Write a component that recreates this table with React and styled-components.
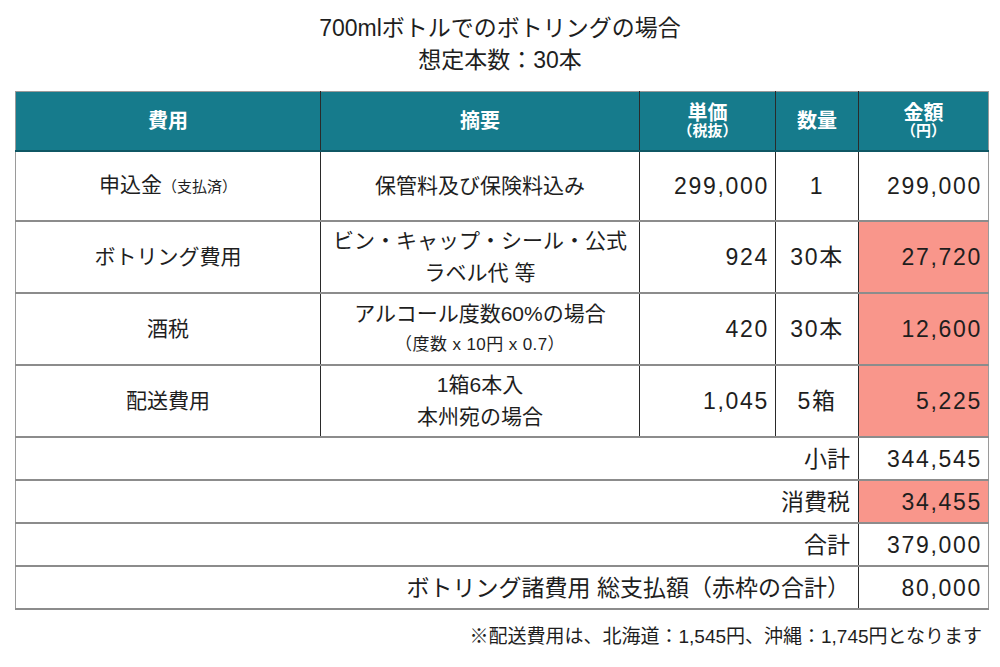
import React from 'react'
import styled, { createGlobalStyle } from 'styled-components'

const GlobalStyle = createGlobalStyle`
  body {
    margin: 0;
    background: #fff;
    font-family: "Liberation Sans", "Noto Sans CJK JP", sans-serif;
    color: #1e1e1e;
  }
`

const Page = styled.div`
  width: 1000px;
  height: 667px;
  padding: 12px 0 0 15px;
  box-sizing: border-box;
`

const Title = styled.h1`
  margin: 0 15px 15px 0;
  font-size: 23px;
  font-weight: 400;
  line-height: 32px;
  text-align: center;
`

const Table = styled.table`
  width: 973px;
  border-collapse: collapse;
  table-layout: fixed;
  border: 1px solid #9a9a9a;
`

const HeadCell = styled.th`
  height: 58px;
  padding: 0;
  background: #167b8c;
  color: #fff;
  font-size: 20px;
  font-weight: 700;
  line-height: 19px;
  border-right: 1px solid #2a2a2a;
  border-bottom: 2px solid #0f5764;
  &:last-child { border-right: 1px solid #9a9a9a; }
`

const SubHead = styled.span`
  display: block;
  font-size: 15px;
  line-height: 16px;
`

const Row = styled.tr`
  height: ${p => p.$h}px;
  border-bottom: 2px solid #8c8c8c;
`

const Cell = styled.td`
  padding: 0 ${p => (p.$align === 'right' ? '8px' : '4px')};
  text-align: ${p => p.$align || 'center'};
  font-size: ${p => (p.$large ? 23 : 21)}px;
  line-height: 32px;
  background: ${p => (p.$pink ? '#f9968b' : '#fff')};
  border-right: 1px solid #2a2a2a;
  &:last-child { border-right: 1px solid #9a9a9a; }
`

const Num = styled(Cell)`
  padding-right: ${p => (p.$align === 'right' ? '6px' : '4px')};
  font-size: 23px;
  letter-spacing: 1.7px;
`

const Small = styled.span`
  font-size: 15px;
`

const Note = styled.span`
  display: block;
  font-size: 17px;
  line-height: 30px;
  letter-spacing: 0.4px;
`

const Footnote = styled.p`
  width: 973px;
  margin: 16px 0 0;
  padding-right: 6px;
  box-sizing: border-box;
  text-align: right;
  font-size: 19px;
  line-height: 22px;
`

const rows = [
  { name: <>申込金<Small>（支払済）</Small></>, desc: '保管料及び保険料込み', price: '299,000', qty: '1', amount: '299,000', h: 70 },
  { name: 'ボトリング費用', desc: <>ビン・キャップ・シール・公式<br />ラベル代 等</>, price: '924', qty: '30本', amount: '27,720', pink: true, h: 72 },
  { name: '酒税', desc: <>アルコール度数60%の場合<Note>（度数 x 10円 x 0.7）</Note></>, price: '420', qty: '30本', amount: '12,600', pink: true, h: 72 },
  { name: '配送費用', desc: <>1箱6本入<br />本州宛の場合</>, price: '1,045', qty: '5箱', amount: '5,225', pink: true, h: 72 },
]

const totals = [
  { label: '小計', value: '344,545' },
  { label: '消費税', value: '34,455', pink: true },
  { label: '合計', value: '379,000' },
  { label: 'ボトリング諸費用 総支払額（赤枠の合計）', value: '80,000' },
]

export default function App() {
  return (
    <Page>
      <GlobalStyle />
      <Title>
        700mlボトルでのボトリングの場合<br />
        想定本数：30本
      </Title>
      <Table>
        <colgroup>
          <col style={{ width: 305 }} />
          <col style={{ width: 319 }} />
          <col style={{ width: 136 }} />
          <col style={{ width: 83 }} />
          <col style={{ width: 130 }} />
        </colgroup>
        <thead>
          <tr>
            <HeadCell>費用</HeadCell>
            <HeadCell>摘要</HeadCell>
            <HeadCell>単価<SubHead>（税抜）</SubHead></HeadCell>
            <HeadCell>数量</HeadCell>
            <HeadCell>金額<SubHead>（円）</SubHead></HeadCell>
          </tr>
        </thead>
        <tbody>
          {rows.map(r => (
            <Row key={r.price} $h={r.h}>
              <Cell>{r.name}</Cell>
              <Cell>{r.desc}</Cell>
              <Num $align="right">{r.price}</Num>
              <Num>{r.qty}</Num>
              <Num $align="right" $pink={r.pink}>{r.amount}</Num>
            </Row>
          ))}
          {totals.map(t => (
            <Row key={t.label} $h={43}>
              <Cell colSpan={4} $align="right" $large>{t.label}</Cell>
              <Num $align="right" $pink={t.pink}>{t.value}</Num>
            </Row>
          ))}
        </tbody>
      </Table>
      <Footnote>※配送費用は、北海道：1,545円、沖縄：1,745円となります</Footnote>
    </Page>
  )
}
